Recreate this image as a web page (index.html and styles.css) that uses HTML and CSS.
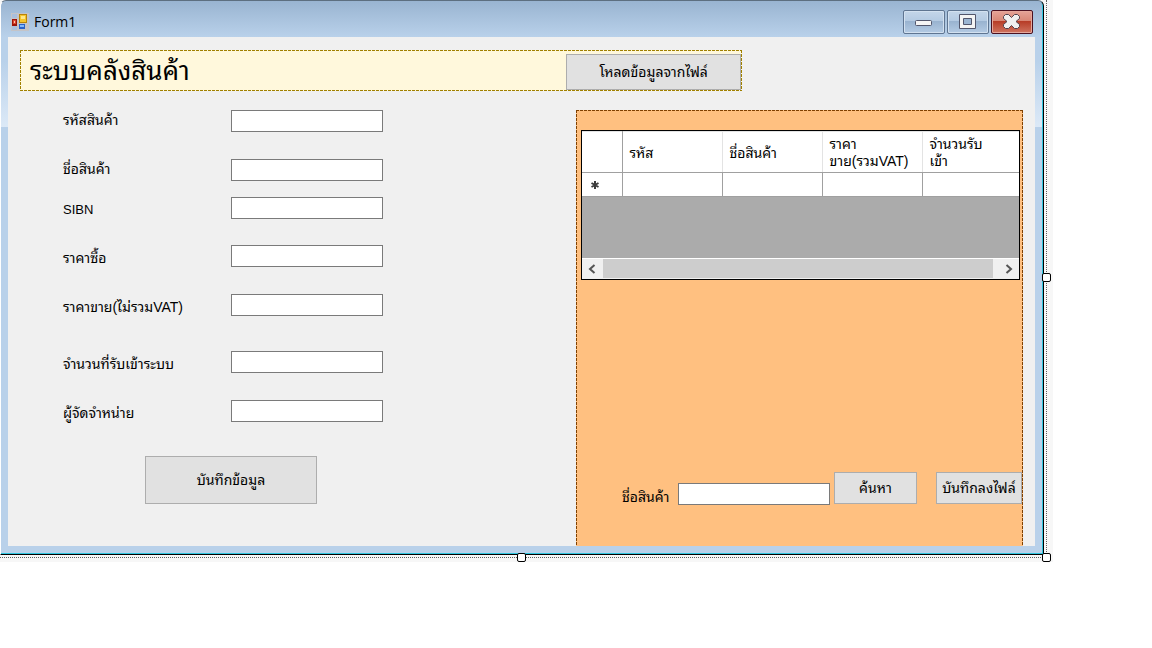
FILE: index.html
```
<!DOCTYPE html>
<html lang="th">
<head>
<meta charset="utf-8">
<title>Form1</title>
<link rel="stylesheet" href="styles.css">
</head>
<body>
<div class="designer">
  <main class="window">
    <header class="titlebar">
      <svg class="app-icon" width="18" height="18" viewBox="0 0 18 18" aria-hidden="true">
        <path d="M0 0h18v18H0z" fill="#c4c4c8"/>
        <path d="M1 1h5v4H1zM1 13h5v4H1z" fill="#a9bfdc"/>
        <path d="M8 1h8v9H8z" fill="#b98408"/>
        <path d="M9 2h6v7H9z" fill="#f5c52c"/>
        <path d="M10 3h4v3h-4z" fill="#ffe88a"/>
        <path d="M1 6h5v7H1z" fill="#9c1408"/>
        <path d="M2 7h3v4H2z" fill="#d8442c"/>
        <path d="M3 8h1v2H3z" fill="#ffc0a8"/>
        <path d="M8 11h6v5H8z" fill="#2a62c8"/>
        <path d="M9 12h4v2H9z" fill="#82b8fa"/>
      </svg>
      <h1 class="caption">Form1</h1>
      <div class="controls">
        <button class="control" aria-label="Minimize">
          <svg width="18" height="18" viewBox="0 0 18 18"><rect x="0.500" y="7.500" width="16" height="5" rx="1" fill="#f4f4f4" stroke="#52566c"/></svg>
        </button>
        <button class="control" aria-label="Maximize">
          <svg width="18" height="18" viewBox="0 0 18 18"><path d="M0.500 1.500h16v14h-16z" fill="#f4f4f4" stroke="#52566c"/><path d="M4.500 5.500h8v6h-8z" fill="#9bb5d2" stroke="#52566c"/></svg>
        </button>
        <button class="control close" aria-label="Close">
          <svg width="18" height="18" viewBox="0 0 18 18"><path d="M0.500 3.500l2-2h3l3 3 3-3h3l2 2v2l-3.500 3 3.500 3v2l-2 2h-3l-3-3-3 3h-3l-2-2v-2l3.500-3-3.500-3z" fill="#f0f0f0" stroke="#52444e" stroke-linejoin="round"/></svg>
        </button>
      </div>
    </header>
    <div class="client">
      <section class="banner">
        <h2 class="heading">ระบบคลังสินค้า</h2>
        <button class="button load">โหลดข้อมูลจากไฟล์</button>
      </section>
      <div class="columns">
        <form class="entry">
          <div class="fields">
            <label for="code">รหัสสินค้า</label><input id="code" class="textbox">
            <label for="name">ชื่อสินค้า</label><input id="name" class="textbox">
            <label for="sibn" class="low latin">SIBN</label><input id="sibn" class="textbox">
            <label for="cost" class="low">ราคาซื้อ</label><input id="cost" class="textbox">
            <label for="price" class="low">ราคาขาย(ไม่รวมVAT)</label><input id="price" class="textbox">
            <label for="amount" class="low">จำนวนที่รับเข้าระบบ</label><input id="amount" class="textbox">
            <label for="vendor" class="low">ผู้จัดจำหน่าย</label><input id="vendor" class="textbox">
          </div>
          <button type="button" class="button save">บันทึกข้อมูล</button>
        </form>
        <section class="panel">
          <div class="datagrid">
            <table class="table">
              <colgroup><col class="row-head"><col class="data"><col class="data"><col class="data"><col></colgroup>
              <thead>
                <tr><th></th><th>รหัส</th><th>ชื่อสินค้า</th><th>ราคา<br>ขาย(รวมVAT)</th><th>จำนวนรับ<br>เข้า</th></tr>
              </thead>
              <tbody>
                <tr><td class="marker"><svg width="8" height="8" viewBox="0 0 8 8" aria-label="New row"><path d="M4 0v8M0.500 2l7 4M7.500 2l-7 4" stroke="#3c3c3c" stroke-width="2"/></svg></td><td></td><td></td><td></td><td></td></tr>
              </tbody>
            </table>
            <div class="scrollbar">
              <button class="arrow" aria-label="Scroll left"><svg width="8" height="10" viewBox="0 0 8 10"><path d="M6.500 1L2 5l4.500 4" fill="none" stroke="#555" stroke-width="2"/></svg></button>
              <div class="thumb"></div>
              <button class="arrow right" aria-label="Scroll right"><svg width="8" height="10" viewBox="0 0 8 10"><path d="M1.500 1L6 5 1.500 9" fill="none" stroke="#555" stroke-width="2"/></svg></button>
            </div>
          </div>
          <form class="search">
            <label for="query">ชื่อสินค้า</label>
            <input id="query" class="textbox">
            <button type="button" class="button find">ค้นหา</button>
            <button type="button" class="button export">บันทึกลงไฟล์</button>
          </form>
        </section>
      </div>
    </div>
  </main>
  <div class="selection">
    <span class="handle east"></span>
    <span class="handle south"></span>
    <span class="handle corner"></span>
  </div>
</div>
</body>
</html>
```
FILE: styles.css
```
* {
  box-sizing: border-box;
}

body {
  margin: 0;
  background: #fff;
  color: #000;
  font: 14px/16px "Liberation Sans", "Noto Sans Thai Looped", Loma, "Noto Sans Thai", sans-serif;
}

.designer {
  position: relative;
  margin-right: 99px;
  padding: 0 9px 7px 0;
  background: #f7f7f7;
}

.window {
  padding: 0 8px 8px 7px;
  border: solid #000;
  border-width: 1px 1px 1px 0;
  border-top-color: #5d6f80;
  border-left: 1px solid #fff;
  border-radius: 6px 6px 0 0;
  background:
    linear-gradient(#99b4d1, #b9d1ea 36px, #b9d1ea 60px, #dce9f7 126px, #b9d1ea 126px);
  box-shadow: inset -1px -1px #2fc5de;
}

.titlebar {
  display: flex;
  align-items: center;
  height: 36px;
  padding: 6px 2px 0 3px;
}

.caption {
  flex: 1;
  margin: 0 0 0 5px;
  font: 14px/18px "Open Sans", "Noto Sans", sans-serif;
}

.controls {
  display: flex;
  gap: 2px;
}

.control {
  display: flex;
  align-items: center;
  justify-content: center;
  width: 42px;
  height: 24px;
  padding: 0;
  border: 1px solid #5f7591;
  border-radius: 2px;
  background: linear-gradient(#c4d6e9, #b4cae2 45%, #98b2cf 45%, #b4cbe4);
  box-shadow: inset 0 0 0 1px #d3e1f0;
}

.close {
  border-color: #4b1020;
  background: linear-gradient(#e5a397, #d88776 45%, #b63a25 45%, #cf7460);
  box-shadow: inset 0 0 0 1px #e5a89c;
}

.client {
  min-height: 509px;
  padding: 13px 12px 0;
  background: #f0f0f0;
}

.banner,
.panel {
  --dash: #a08000;
  background:
    repeating-linear-gradient(90deg, var(--dash) 0 3px, transparent 3px 4px) top / 100% 1px no-repeat,
    repeating-linear-gradient(var(--dash) 0 3px, transparent 3px 4px) left / 1px 100% no-repeat,
    repeating-linear-gradient(var(--dash) 0 3px, transparent 3px 4px) right / 1px 100% no-repeat,
    repeating-linear-gradient(90deg, var(--dash) 0 3px, transparent 3px 4px) bottom / 100% 1px no-repeat,
    #fff8dc;
}

.banner {
  display: flex;
  align-items: flex-end;
  justify-content: space-between;
  width: 72%;
  height: 41px;
  padding: 1px 1px 1px 10px;
}

.heading {
  align-self: center;
  margin: 0;
  font-size: 26px;
  font-weight: normal;
  line-height: 36px;
}

.button {
  padding: 0;
  border: 1px solid #adadad;
  background: #e1e1e1;
  color: #000;
  font: inherit;
  white-space: nowrap;
}

.load {
  width: 175px;
  height: 36px;
}

.columns {
  display: grid;
  grid-template-columns: 556fr 447fr;
  margin-top: 19px;
}

.entry {
  padding-left: 43px;
}

.fields {
  display: grid;
  grid-template-columns: 168px 152px;
  grid-template-rows: 49px 38px 48px 49px 57px 49px 56px;
}

.fields label {
  padding-top: 2px;
  white-space: nowrap;
}

.fields .low {
  padding-top: 5px;
}

.fields .latin {
  font-size: 13px;
}

.textbox {
  width: 152px;
  height: 22px;
  padding: 2px;
  border: 1px solid #7a7a7a;
  background: #fff;
  font: inherit;
}

.save {
  width: 172px;
  height: 48px;
  margin-left: 82px;
}

.panel {
  --dash: #804000;
  min-height: 436px;
  padding-top: 20px;
  background-size: 100% 1px, 1px 100%, 1px 100%, 0 0;
  background-color: #ffc080;
}

.datagrid {
  display: flex;
  flex-direction: column;
  height: 150px;
  margin: 0 3px 0 5px;
  border: 1px solid #000;
  background: #ababab;
}

.table {
  width: 100%;
  border-collapse: collapse;
  table-layout: fixed;
  background: #fff;
}

.row-head {
  width: 40px;
}

.data {
  width: 100px;
}

.table th {
  height: 41px;
  padding: 2px 0 0 7px;
  border: solid #e3e3e3;
  border-width: 1px 1px 0 0;
  border-bottom: 1px solid #a0a0a0;
  font-weight: normal;
  line-height: 17px;
  text-align: left;
  white-space: nowrap;
}

.table td {
  height: 24px;
  padding: 0;
  border: solid #a0a0a0;
  border-width: 0 1px 1px 0;
}

.table th:first-child {
  border-right-color: #a0a0a0;
}

.table tr > :last-child {
  border-right: 0;
}

.table .marker {
  padding-left: 9px;
}

.marker svg {
  display: block;
}

.scrollbar {
  display: flex;
  height: 21px;
  margin-top: auto;
  border-top: 1px solid #fff;
  background: #f0f0f0;
}

.arrow {
  display: flex;
  align-items: center;
  justify-content: center;
  width: 21px;
  padding: 0 2px 0 0;
  border: 0;
  background: #f0f0f0;
}

.arrow.right {
  width: 26px;
  padding: 0 0 0 5px;
}

.thumb {
  flex: 1;
  margin-bottom: 1px;
  background: #cdcdcd;
}

.search {
  display: flex;
  align-items: flex-start;
  justify-content: flex-end;
  margin: 192px 1px 0 0;
}

.search label {
  width: 56px;
  padding-top: 17px;
  white-space: nowrap;
}

.search .textbox {
  margin: 11px 4px 0 0;
}

.find,
.export {
  height: 32px;
}

.find {
  width: 83px;
  margin-right: 19px;
}

.export {
  width: 86px;
}

.selection {
  position: absolute;
  inset: 0 6px 4px 0;
  border: dotted #606060;
  border-width: 0 1px 1px 0;
}

.handle {
  position: absolute;
  width: 9px;
  height: 9px;
  border: 1px solid #000;
  border-radius: 2px;
  background: #fff;
}

.east {
  top: calc(50% - 6px);
  right: -5px;
}

.south {
  bottom: -5px;
  left: calc(50% - 6px);
}

.corner {
  right: -5px;
  bottom: -5px;
}
```
